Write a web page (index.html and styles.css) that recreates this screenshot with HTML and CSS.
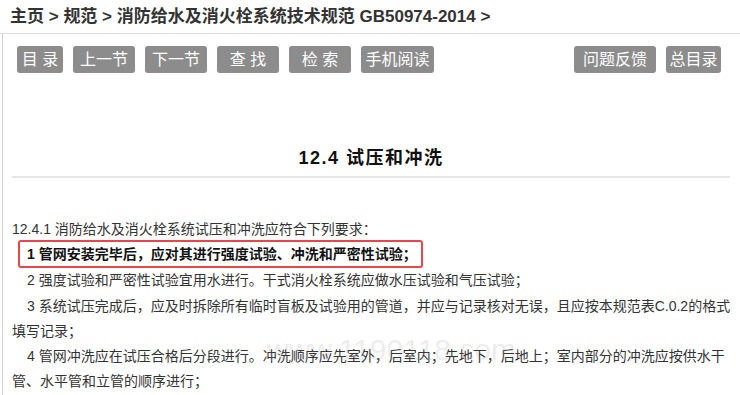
FILE: index.html
```html
<!DOCTYPE html>
<html lang="zh-CN">
<head>
  <meta charset="UTF-8" />
  <meta name="viewport" content="width=device-width, initial-scale=1.0"/>
  <title>12.4 试压和冲洗 - 消防给水及消火栓系统技术规范</title>
  <link rel="stylesheet" href="styles.css">
</head>
<body>
  <div class="crumbs">
    <a href="#">主页</a> &gt; <a href="#">规范</a> &gt; <a href="#">消防给水及消火栓系统技术规范 GB50974-2014</a> &gt;
  </div>

  <div class="page">
    <div class="toolbar">
      <a class="btn btn-xs" href="#">目 录</a>
      <a class="btn" href="#">上一节</a>
      <a class="btn" href="#">下一节</a>
      <a class="btn" href="#">查 找</a>
      <a class="btn" href="#">检 索</a>
      <a class="btn btn-md" href="#">手机阅读</a>
      <div class="toolbar-right">
        <a class="btn btn-lg" href="#">问题反馈</a>
        <a class="btn btn-sm" href="#">总目录</a>
      </div>
    </div>

    <h1 class="title">12.4 试压和冲洗</h1>

    <div class="clause">
      <p>12.4.1 消防给水及消火栓系统试压和冲洗应符合下列要求：</p>
      <p class="item"><span class="mark">1 管网安装完毕后，应对其进行强度试验、冲洗和严密性试验；</span></p>
      <p class="item">2 强度试验和严密性试验宜用水进行。干式消火栓系统应做水压试验和气压试验；</p>
      <p class="item">3 系统试压完成后，应及时拆除所有临时盲板及试验用的管道，并应与记录核对无误，且应按本规范表C.0.2的格式填写记录；</p>
      <p class="item">4 管网冲洗应在试压合格后分段进行。冲洗顺序应先室外，后室内；先地下，后地上；室内部分的冲洗应按供水干管、水平管和立管的顺序进行；</p>
      <div class="watermark">www.1190118.com</div>
    </div>
  </div>
</body>
</html>
```

FILE: styles.css
```css
body {
  margin: 0;
  font-family: "Liberation Sans", "Noto Sans CJK SC", sans-serif;
  background: #fff;
  color: #333;
}
a {
  color: inherit;
  text-decoration: none;
}
.crumbs {
  height: 33px;
  line-height: 34px;
  padding-left: 10px;
  font-size: 17px;
  font-weight: bold;
  color: #333;
  border-bottom: 1px solid #dcdcdc;
  white-space: nowrap;
}
.page {
  margin-left: 2px;
  padding: 0 10px 20px 9px;
  border-left: 1px solid #d0d0d0;
}
.toolbar {
  display: flex;
  gap: 10px;
  padding: 12px 9px 0 5px;
}
.toolbar-right {
  display: flex;
  gap: 10px;
  margin-left: auto;
}
.btn {
  display: block;
  width: 62px;
  height: 27px;
  line-height: 27px;
  text-align: center;
  font-size: 16px;
  color: #fff;
  background: #8c8c8c;
  border-radius: 3px;
  white-space: pre;
}
.btn-xs { width: 46px; }
.btn-sm { width: 55px; }
.btn-md { width: 73px; }
.btn-lg { width: 82px; }

.title {
  margin: 70px 0 0;
  padding-bottom: 3px;
  line-height: 30px;
  font-size: 18px;
  letter-spacing: 1.5px;
  text-align: center;
  color: #111;
  border-bottom: 2px solid #e6e6e6;
}

.clause {
  position: relative;
  margin: 39px -9px 0 0;
  font-size: 14px;
  line-height: 25px;
  color: #333;
}
.clause p {
  margin: 0;
}
.item {
  text-indent: 15px;
}
.item:nth-child(3), .item:nth-child(4) {
  margin-top: 1px;
}
.mark {
  margin-left: -9px;
  padding: 4px 4px 4px 7px;
  border: 2px solid #e4484b;
  border-radius: 3px;
  font-weight: bold;
  color: #111;
}
.watermark {
  position: absolute;
  left: 255px;
  top: 118px;
  font-size: 30px;
  line-height: 1;
  color: rgba(140, 140, 140, 0.18);
  pointer-events: none;
}
```
